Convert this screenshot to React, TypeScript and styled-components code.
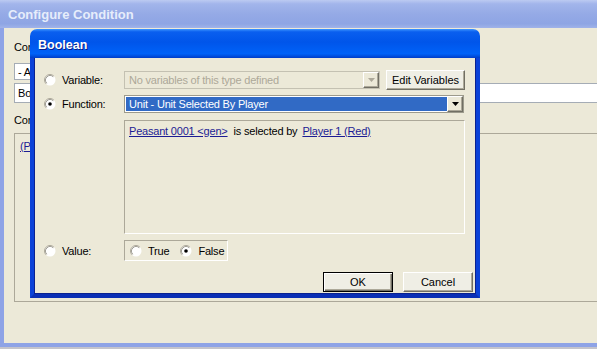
import React from "react";
import styled, { createGlobalStyle } from "styled-components";

const GlobalStyle = createGlobalStyle`
  html, body {
    margin: 0;
    padding: 0;
  }
  body {
    width: 597px;
    height: 349px;
    overflow: hidden;
    background: #c4c4cc;
    font-family: "Liberation Sans", Arial, sans-serif;
    font-size: 11px;
    letter-spacing: -0.2px;
    color: #000;
  }
`;

const Screen = styled.div`
  position: relative;
  width: 597px;
  height: 349px;
  overflow: hidden;
`;

/* background window */

const BackWindow = styled.div`
  width: 640px;
  height: 347px;
  display: flex;
  flex-direction: column;
`;

const BackTitle = styled.div`
  flex: none;
  height: 28px;
  display: flex;
  align-items: center;
  padding-left: 8px;
  background: linear-gradient(#bccaf1 0%, #a2b5eb 14%, #95aae6 50%, #8ea5e4 85%, #a0b3e9 100%);
  color: #e6edfb;
  font-size: 13px;
  font-weight: bold;
  letter-spacing: 0;
`;

const BackBody = styled.div`
  flex: 1;
  display: flex;
  flex-direction: column;
  background: #ece9d8;
  border-left: 4px solid #8ea3e6;
  border-bottom: 4px solid #8ea3e6;
  padding: 12px 0 0 10px;
`;

const BackLabel = styled.div<{ $gap?: number }>`
  height: 14px;
  line-height: 14px;
  margin-top: ${(p) => p.$gap ?? 0}px;
`;

const BackField = styled.div<{ $width: number; $height: number; $gap: number }>`
  width: ${(p) => p.$width}px;
  height: ${(p) => p.$height}px;
  margin-top: ${(p) => p.$gap}px;
  box-sizing: border-box;
  background: #fff;
  border: 1px solid #a5acb5;
  padding-left: 3px;
  display: flex;
  align-items: center;
`;

const BackPanel = styled.div`
  width: 640px;
  height: 169px;
  margin-top: 6px;
  box-sizing: border-box;
  border: 1px solid #aca899;
  padding: 5px 5px;
  line-height: 14px;
`;

/* dialog */

const Dialog = styled.div`
  position: absolute;
  left: 30px;
  top: 29px;
  width: 450px;
  height: 269px;
  display: flex;
  flex-direction: column;
`;

const DialogTitle = styled.div`
  flex: none;
  height: 29px;
  display: flex;
  align-items: center;
  padding: 2px 0 0 8px;
  box-sizing: border-box;
  border-radius: 7px 7px 0 0;
  background: linear-gradient(
    #3d95ff 0%,
    #0a5fef 10%,
    #0055ea 45%,
    #0062f8 85%,
    #0050e0 93%,
    #003cc8 100%
  );
  color: #fff;
  font-size: 12.5px;
  font-weight: bold;
  letter-spacing: 0;
  text-shadow: 1px 1px #0a1e8a;
`;

const DialogFrame = styled.div`
  flex: 1;
  display: flex;
  border: 4px solid #0b42d8;
  border-top: none;
  border-bottom-color: #0a2fb5;
`;

const DialogBody = styled.div`
  flex: 1;
  display: flex;
  flex-direction: column;
  background: #ece9d8;
  border: 1px solid #0a2290;
  border-top: none;
  padding: 12px 1px 0 9px;
`;

const Row = styled.div<{ $gap?: number; $height: number }>`
  display: flex;
  align-items: center;
  height: ${(p) => p.$height}px;
  margin-top: ${(p) => p.$gap ?? 0}px;
`;

const LeftCell = styled.label`
  flex: none;
  width: 80px;
  display: flex;
  align-items: center;
  gap: 6px;
`;

const Combo = styled.div<{ $width: number; $disabled?: boolean }>`
  flex: none;
  width: ${(p) => p.$width}px;
  height: 18px;
  box-sizing: border-box;
  display: flex;
  border: 1px solid ${(p) => (p.$disabled ? "#c4c1b2" : "#9c9a8c")};
  background: ${(p) => (p.$disabled ? "#ece9d8" : "#fff")};
`;

const ComboText = styled.div<{ $selected?: boolean; $disabled?: boolean }>`
  flex: 1;
  display: flex;
  align-items: center;
  padding-left: 3px;
  margin: 1px 0 1px 1px;
  background: ${(p) => (p.$selected ? "#316ac5" : "transparent")};
  color: ${(p) => (p.$selected ? "#fff" : p.$disabled ? "#aca899" : "#000")};
  white-space: nowrap;
  overflow: hidden;
`;

const ComboButton = styled.div`
  flex: none;
  width: 16px;
  box-sizing: border-box;
  display: flex;
  align-items: center;
  justify-content: center;
  background: #ece9d8;
  border: 1px solid;
  border-color: #fff #716f64 #716f64 #fff;
  box-shadow: inset -1px -1px #aca899;
`;

const Button = styled.button<{ $width: number; $default?: boolean }>`
  flex: none;
  width: ${(p) => p.$width}px;
  height: 20px;
  box-sizing: border-box;
  padding: 0;
  margin: 0;
  font: inherit;
  color: #000;
  background: #efeee5;
  border: 1px solid;
  border-color: ${(p) => (p.$default ? "#000" : "#fff #716f64 #716f64 #fff")};
  box-shadow: ${(p) =>
    p.$default
      ? "inset 1px 1px #fff, inset -1px -1px #716f64, inset -2px -2px #aca899"
      : "inset -1px -1px #aca899"};
`;

const TextPanel = styled.div`
  width: 341px;
  height: 114px;
  margin: 7px 0 0 80px;
  box-sizing: border-box;
  border: 1px solid;
  border-color: #aca899 #fff #fff #aca899;
  padding: 3px 4px;
  line-height: 14px;
  white-space: nowrap;
`;

const Link = styled.span`
  color: #1c1c94;
  text-decoration: underline;
`;

const Plain = styled.span`
  margin: 0 5px 0 6px;
`;

const GroupBox = styled.div`
  width: 104px;
  height: 21px;
  box-sizing: border-box;
  border: 1px solid;
  border-color: #aca899 #fff #fff #aca899;
  display: flex;
  align-items: center;
  padding-left: 5px;
`;

const Choice = styled.label<{ $gap?: number }>`
  display: flex;
  align-items: center;
  gap: 6px;
  margin-left: ${(p) => p.$gap ?? 0}px;
`;

const ButtonRow = styled.div`
  display: flex;
  justify-content: flex-end;
  gap: 10px;
  margin-top: 11px;
  padding-right: 1px;
`;

function Radio({ checked }: { checked?: boolean }) {
  return (
    <svg width="12" height="12" viewBox="0 0 12 12" style={{ flex: "none" }}>
      <circle cx="6" cy="6" r="5.5" fill="#fff" />
      <path d="M2.11 9.89 A5.5 5.5 0 0 1 9.89 2.11" fill="none" stroke="#aca899" />
      <path d="M2.82 9.18 A4.5 4.5 0 0 1 9.18 2.82" fill="none" stroke="#8a887c" strokeWidth="0.8" />
      {checked && <circle cx="6" cy="6" r="1.8" fill="#000" />}
    </svg>
  );
}

function Arrow({ color }: { color: string }) {
  return (
    <svg width="7" height="4" viewBox="0 0 7 4">
      <path d="M0 0 H7 L3.5 4 Z" fill={color} />
    </svg>
  );
}

export default function App() {
  return (
    <Screen>
      <GlobalStyle />
      <BackWindow>
        <BackTitle>Configure Condition</BackTitle>
        <BackBody>
          <BackLabel>Condition Type:</BackLabel>
          <BackField $width={300} $height={17} $gap={9}>
            - All -
          </BackField>
          <BackField $width={640} $height={20} $gap={3}>
            Boolean Comparison
          </BackField>
          <BackLabel $gap={10}>Condition:</BackLabel>
          <BackPanel>
            <Link>(Peasant 0001 &lt;gen&gt; is selected by Player 1 (Red)) Equal to False</Link>
          </BackPanel>
        </BackBody>
      </BackWindow>

      <Dialog>
        <DialogTitle>Boolean</DialogTitle>
        <DialogFrame>
          <DialogBody>
            <Row $height={20}>
              <LeftCell>
                <Radio />
                Variable:
              </LeftCell>
              <Combo $width={256} $disabled>
                <ComboText $disabled>No variables of this type defined</ComboText>
                <ComboButton>
                  <Arrow color="#aca899" />
                </ComboButton>
              </Combo>
              <Button $width={79} style={{ marginLeft: 6 }}>
                Edit Variables
              </Button>
            </Row>

            <Row $height={18} $gap={5}>
              <LeftCell>
                <Radio checked />
                Function:
              </LeftCell>
              <Combo $width={340}>
                <ComboText $selected>Unit - Unit Selected By Player</ComboText>
                <ComboButton>
                  <Arrow color="#000" />
                </ComboButton>
              </Combo>
            </Row>

            <TextPanel>
              <Link>Peasant 0001 &lt;gen&gt;</Link>
              <Plain>is selected by</Plain>
              <Link>Player 1 (Red)</Link>
            </TextPanel>

            <Row $height={21} $gap={6}>
              <LeftCell>
                <Radio />
                Value:
              </LeftCell>
              <GroupBox>
                <Choice>
                  <Radio />
                  True
                </Choice>
                <Choice $gap={11}>
                  <Radio checked />
                  False
                </Choice>
              </GroupBox>
            </Row>

            <ButtonRow>
              <Button $width={70} $default>
                OK
              </Button>
              <Button $width={70}>Cancel</Button>
            </ButtonRow>
          </DialogBody>
        </DialogFrame>
      </Dialog>
    </Screen>
  );
}
